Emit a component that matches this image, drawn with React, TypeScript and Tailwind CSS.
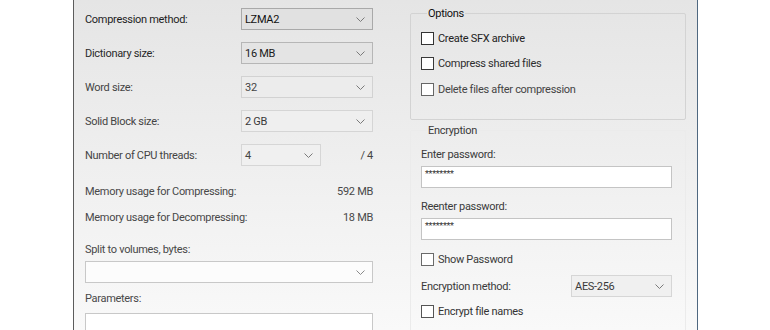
import React from "react";

const Chevron = ({ color = "#7a7a7a" }: { color?: string }) => (
    <svg width="9" height="5" viewBox="0 0 9 5" className="shrink-0">
        <path d="M0.5 0.5 L4.5 4.5 L8.5 0.5" fill="none" stroke={color} strokeWidth="1" />
    </svg>
);

interface ComboProps {
    value: string
    box: string
    text: string
    width: string
}

const Combo = ({ value, box, text, width }: ComboProps) => (
    <div className={`h-[22px] ${width} ${box} border flex items-center justify-between pl-[3px] pr-[7px]`}>
        <span className={text}>{value}</span>
        <Chevron />
    </div>
);

const Check = ({ label, box = "border-[#333]", text = "text-[#222]" }: { label: string, box?: string, text?: string }) => (
    <div className="h-[18px] flex items-center">
        <div className={`w-[13px] h-[13px] bg-white border ${box}`}></div>
        <span className={`ml-[4px] ${text}`}>{label}</span>
    </div>
);

const Row = ({ label, color, children }: { label: string, color: string, children: React.ReactNode }) => (
    <div className="h-[22px] flex items-center">
        <span className={`w-[156px] ${color}`}>{label}</span>
        {children}
    </div>
);

export default function App() {
    return (
        <div className="w-[770px] h-[330px] bg-white overflow-hidden flex font-['Roboto',sans-serif] text-[11px] tracking-[-0.3px] leading-none">
            <div className="w-[73px] shrink-0"></div>
            <div className="w-[625px] h-[330px] shrink-0 overflow-hidden border-l border-l-[#5c5c5c] border-r border-r-[#4f6880] bg-gradient-to-b from-[#e5e5e5] to-[#f9f9f9] flex">
                {/* left column */}
                <div className="w-[299px] shrink-0 pl-[11px] pt-[8px]">
                    <Row label="Compression method:" color="text-[#1e1e1e]">
                        <Combo value="LZMA2" width="w-[132px]" box="bg-[#e1e1e1] border-[#a9a9a9]" text="text-[#111]" />
                    </Row>
                    <div className="mt-[12px]">
                        <Row label="Dictionary size:" color="text-[#2a2a2a]">
                            <Combo value="16 MB" width="w-[132px]" box="bg-[#e4e4e4] border-[#b6b6b6]" text="text-[#1a1a1a]" />
                        </Row>
                    </div>
                    <div className="mt-[12px]">
                        <Row label="Word size:" color="text-[#444]">
                            <Combo value="32" width="w-[132px]" box="bg-[#ececec] border-[#d2d2d2]" text="text-[#444]" />
                        </Row>
                    </div>
                    <div className="mt-[12px]">
                        <Row label="Solid Block size:" color="text-[#444]">
                            <Combo value="2 GB" width="w-[132px]" box="bg-[#efefef] border-[#d5d5d5]" text="text-[#3a3a3a]" />
                        </Row>
                    </div>
                    <div className="mt-[12px]">
                        <Row label="Number of CPU threads:" color="text-[#444]">
                            <Combo value="4" width="w-[80px]" box="bg-[#f0f0f0] border-[#d6d6d6]" text="text-[#444]" />
                            <span className="w-[52px] text-right text-[#444]">/ 4</span>
                        </Row>
                    </div>
                    <div className="mt-[16px] h-[18px] flex items-center justify-between w-[288px] text-[#484848]">
                        <span>Memory usage for Compressing:</span>
                        <span>592 MB</span>
                    </div>
                    <div className="mt-[8px] h-[18px] flex items-center justify-between w-[288px] text-[#484848]">
                        <span>Memory usage for Decompressing:</span>
                        <span>18 MB</span>
                    </div>
                    <div className="mt-[14px] h-[18px] flex items-center text-[#484848]">Split to volumes, bytes:</div>
                    <div className="mt-[3px] h-[22px] w-[288px] bg-[#fcfcfc] border border-[#c8c8c8] flex items-center justify-end pr-[7px]">
                        <Chevron color="#8a8a8a" />
                    </div>
                    <div className="mt-[6px] h-[18px] flex items-center text-[#484848]">Parameters:</div>
                    <div className="mt-[6px] h-[22px] w-[288px] bg-white border border-[#c8c8c8]"></div>
                </div>

                {/* right column */}
                <div className="ml-[37px] w-[276px] shrink-0">
                    <fieldset className="mt-[6px] w-[276px] h-[114px] border border-[#d3d3d3] rounded-[2px] pl-[10px]">
                        <legend className="ml-[6px] px-[1px] h-[14px] flex items-center text-[#111]">Options</legend>
                        <div className="mt-[9px]">
                            <Check label="Create SFX archive" />
                        </div>
                        <div className="mt-[7px]">
                            <Check label="Compress shared files" box="border-[#3a3a3a]" text="text-[#2e2e2e]" />
                        </div>
                        <div className="mt-[8px]">
                            <Check label="Delete files after compression" box="border-[#666]" text="text-[#444]" />
                        </div>
                    </fieldset>
                    <fieldset className="mt-[3px] w-[276px] h-[220px] border border-[#ebebeb] rounded-[2px] pl-[10px]">
                        <legend className="ml-[6px] px-[1px] h-[14px] flex items-center text-[#3a3a3a]">Encryption</legend>
                        <div className="mt-[9px] h-[16px] flex items-center text-[#3a3a3a]">Enter password:</div>
                        <div className="mt-[4px] h-[22px] w-[251px] bg-white border border-[#c4c4c4] pl-[3px] pt-[3px] text-[9px] text-[#333] leading-[9px]">********</div>
                        <div className="mt-[10px] h-[16px] flex items-center text-[#3a3a3a]">Reenter password:</div>
                        <div className="mt-[4px] h-[22px] w-[251px] bg-white border border-[#c4c4c4] pl-[3px] pt-[3px] text-[9px] text-[#333] leading-[9px]">********</div>
                        <div className="mt-[10px]">
                            <Check label="Show Password" box="border-[#6a6a6a]" text="text-[#3a3a3a]" />
                        </div>
                        <div className="mt-[7px] h-[22px] flex items-center">
                            <span className="w-[150px] text-[#3a3a3a]">Encryption method:</span>
                            <Combo value="AES-256" width="w-[101px]" box="bg-[#f0f0f0] border-[#d6d6d6]" text="text-[#3a3a3a]" />
                        </div>
                        <div className="mt-[5px]">
                            <Check label="Encrypt file names" box="border-[#555]" text="text-[#333]" />
                        </div>
                    </fieldset>
                </div>
            </div>
        </div>
    );
}
